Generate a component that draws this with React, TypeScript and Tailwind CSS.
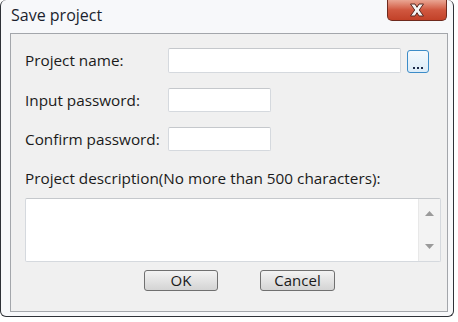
export default function App() {
  const font = { fontFamily: "'Open Sans', 'Noto Sans', sans-serif" };
  return (
    <div className="w-[458px] h-[322px] bg-white" style={font}>
      <div className="w-[454px] h-[317px] rounded-[6px] border-x border-b border-[#2f3238] bg-[#f7f8fa] flex flex-col">
        {/* title bar */}
        <div className="h-[33px] flex items-start justify-between">
          <span className="ml-[10px] mt-[4px] text-[16px] text-[#1b1f2e] leading-[22px]">Save project</span>
          <button
            type="button"
            className="mr-[6px] w-[60px] h-[21px] rounded-b-[5px] border border-t-0 border-[#6e2a1e] bg-gradient-to-b from-[#e9a593] via-[#d0573f] to-[#c24128] flex items-center justify-center"
          >
            <svg width="20" height="14" viewBox="0 0 20 14">
              <path d="M3.5 1 L8 1 L10 4.3 L12 1 L16.5 1 L12.3 7 L16.5 13 L12 13 L10 9.7 L8 13 L3.5 13 L7.7 7 Z" fill="#f4f4f4" stroke="#5a2a22" strokeWidth="1" />
            </svg>
          </button>
        </div>

        {/* content panel */}
        <div className="ml-[9px] w-[438px] h-[279px] border border-[#a3a6ab] bg-[#f0f0f0] flex flex-col text-[15.3px] text-[#1a1a1a]">
          <div className="mt-[14px] ml-[14px] h-[25px] flex items-center">
            <span className="w-[143px]">Project name:</span>
            <div className="w-[233px] h-[25px] bg-white border border-[#d5d9de] border-t-[#c5c8cc] rounded-[2px]" />
            <button
              type="button"
              className="ml-[6px] mt-[2px] w-[22px] h-[23px] rounded-[3px] border border-[#3c8cc8] bg-gradient-to-b from-[#f4f9fd] to-[#dcecf8] flex items-end justify-center pb-[3px]"
            >
              <span className="flex gap-[2px]">
                <i className="block w-[2px] h-[2px] bg-[#1d2a4a]" />
                <i className="block w-[2px] h-[2px] bg-[#1d2a4a]" />
                <i className="block w-[2px] h-[2px] bg-[#1d2a4a]" />
              </span>
            </button>
          </div>

          <div className="mt-[15px] ml-[14px] h-[24px] flex items-center">
            <span className="w-[143px]">Input password:</span>
            <div className="w-[103px] h-[24px] bg-white border border-[#d5d9de] border-t-[#c5c8cc] rounded-[2px]" />
          </div>

          <div className="mt-[15px] ml-[14px] h-[24px] flex items-center">
            <span className="w-[143px]">Confirm password:</span>
            <div className="w-[103px] h-[24px] bg-white border border-[#d5d9de] border-t-[#c5c8cc] rounded-[2px]" />
          </div>

          <div className="mt-[17px] ml-[14px] h-[20px] leading-[20px]">Project description(No more than 500 characters):</div>

          <div className="mt-[10px] ml-[14px] w-[416px] h-[64px] bg-white border border-[#d5d9de] border-t-[#c5c8cc] rounded-[2px] flex justify-end">
            <div className="w-[22px] h-full bg-[#f3f3f3] border-l border-[#e8e8e8] flex flex-col items-center justify-between py-[12px]">
              <svg width="9" height="5" viewBox="0 0 9 5"><path d="M0 5 L4.5 0 L9 5 Z" fill="#9a9a9a" /></svg>
              <svg width="9" height="5" viewBox="0 0 9 5"><path d="M0 0 L4.5 5 L9 0 Z" fill="#9a9a9a" /></svg>
            </div>
          </div>

          <div className="mt-[8px] ml-[133px] flex gap-[42px]">
            <button
              type="button"
              className="w-[74px] h-[21px] rounded-[3px] border border-[#707070] bg-gradient-to-b from-[#f3f3f3] to-[#d4d4d4] text-[15px] leading-[19px] text-[#1a1a1a]"
            >
              OK
            </button>
            <button
              type="button"
              className="w-[75px] h-[21px] rounded-[3px] border border-[#707070] bg-gradient-to-b from-[#f3f3f3] to-[#d4d4d4] text-[15px] leading-[19px] text-[#1a1a1a]"
            >
              Cancel
            </button>
          </div>
        </div>
      </div>
    </div>
  );
}
